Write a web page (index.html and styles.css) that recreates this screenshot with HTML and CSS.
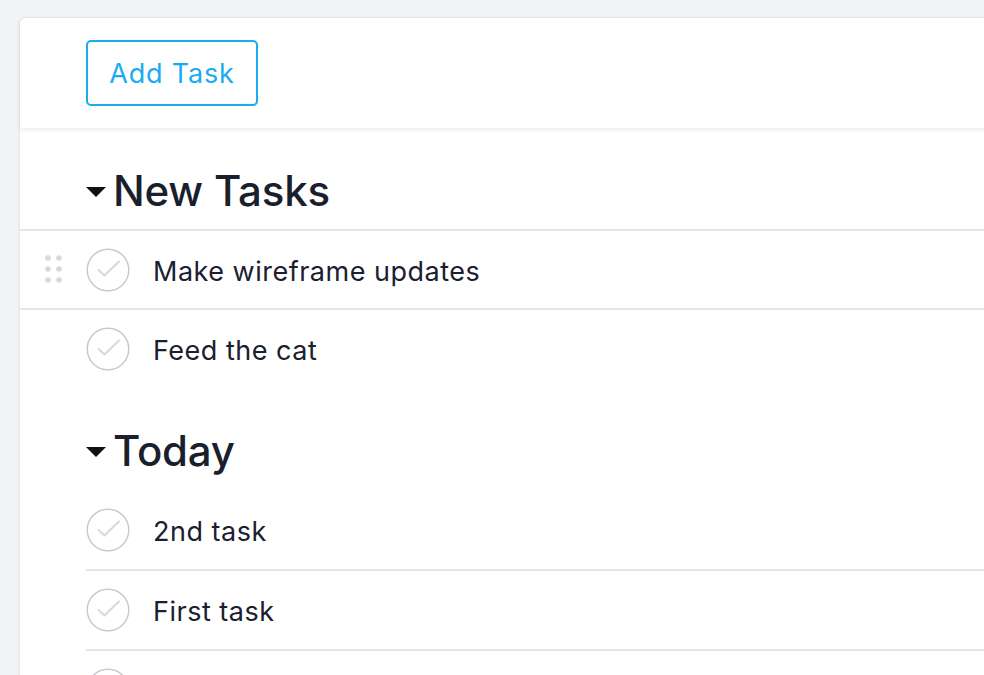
FILE: index.html
```html
<!DOCTYPE html>
<html>
<head>
<meta charset="utf-8">
<link rel="stylesheet" href="styles.css">
</head>
<body>
<div class="page">
  <div class="card">
    <header class="toolbar">
      <button class="add-btn">Add Task</button>
    </header>
    <section class="group">
      <h2 class="group-title"><span class="caret"></span>New Tasks</h2>
      <div class="task task-hover">
        <span class="drag">
          <svg width="18" height="28" viewBox="0 0 18 28"><g fill="#d3d9dd"><circle cx="3" cy="3" r="2.8"/><circle cx="14" cy="3" r="2.8"/><circle cx="3" cy="14" r="2.8"/><circle cx="14" cy="14" r="2.8"/><circle cx="3" cy="25" r="2.8"/><circle cx="14" cy="25" r="2.8"/></g></svg>
        </span>
        <span class="check"><svg width="44" height="44" viewBox="0 0 44 44"><circle cx="22" cy="22" r="20.75" fill="none" stroke="#c3cad1" stroke-width="1.5"/><path d="M12.5 22 L18.5 27.5 L33 13.5" fill="none" stroke="#d2d9df" stroke-width="2" stroke-linecap="round" stroke-linejoin="round"/></svg></span>
        <span class="task-name">Make wireframe updates</span>
      </div>
      <div class="task task-last">
        <span class="check"><svg width="44" height="44" viewBox="0 0 44 44"><circle cx="22" cy="22" r="20.75" fill="none" stroke="#c3cad1" stroke-width="1.5"/><path d="M12.5 22 L18.5 27.5 L33 13.5" fill="none" stroke="#d2d9df" stroke-width="2" stroke-linecap="round" stroke-linejoin="round"/></svg></span>
        <span class="task-name">Feed the cat</span>
      </div>
    </section>
    <section class="group group-plain">
      <h2 class="group-title"><span class="caret"></span>Today</h2>
      <div class="task task-inset">
        <span class="check"><svg width="44" height="44" viewBox="0 0 44 44"><circle cx="22" cy="22" r="20.75" fill="none" stroke="#c3cad1" stroke-width="1.5"/><path d="M12.5 22 L18.5 27.5 L33 13.5" fill="none" stroke="#d2d9df" stroke-width="2" stroke-linecap="round" stroke-linejoin="round"/></svg></span>
        <span class="task-name">2nd task</span>
      </div>
      <div class="task task-inset">
        <span class="check"><svg width="44" height="44" viewBox="0 0 44 44"><circle cx="22" cy="22" r="20.75" fill="none" stroke="#c3cad1" stroke-width="1.5"/><path d="M12.5 22 L18.5 27.5 L33 13.5" fill="none" stroke="#d2d9df" stroke-width="2" stroke-linecap="round" stroke-linejoin="round"/></svg></span>
        <span class="task-name">First task</span>
      </div>
      <div class="task task-inset">
        <span class="check"><svg width="44" height="44" viewBox="0 0 44 44"><circle cx="22" cy="22" r="20.75" fill="none" stroke="#c3cad1" stroke-width="1.5"/><path d="M12.5 22 L18.5 27.5 L33 13.5" fill="none" stroke="#d2d9df" stroke-width="2" stroke-linecap="round" stroke-linejoin="round"/></svg></span>
      </div>
    </section>
  </div>
</div>
</body>
</html>
```
FILE: styles.css
```css
* { box-sizing: border-box; }
html, body { margin: 0; padding: 0; }
body {
  background: #f1f4f5;
  font-family: Inter, "Noto Sans", "Liberation Sans", sans-serif;
  color: #1a2030;
  overflow: hidden;
  height: 675px;
}
.page {
  padding: 18px 0 0 20px;
}
.card {
  background: #fff;
  border-top-left-radius: 6px;
  box-shadow: 0 0 3px rgba(0, 0, 0, 0.12);
  width: 1000px;
  min-height: 700px;
}
.toolbar {
  height: 110px;
  padding: 22px 0 0 66px;
  box-shadow: 0 2px 5px rgba(0, 0, 0, 0.08);
  position: relative;
}
.add-btn {
  width: 172px;
  height: 66px;
  border: 2px solid #1aabf0;
  border-radius: 5px;
  background: #fff;
  color: #1aabf0;
  font-family: inherit;
  font-size: 27px;
  letter-spacing: 0.8px;
  padding: 0;
}
.group-title {
  margin: 0;
  height: 103px;
  padding: 38px 0 0 66px;
  font-size: 42px;
  line-height: 50px;
  font-weight: 500;
  letter-spacing: -0.2px;
  display: flex;
  align-items: flex-start;
  color: #1a1f2d;
}
.caret {
  width: 0;
  height: 0;
  border-left: 10px solid transparent;
  border-right: 10px solid transparent;
  border-top: 10px solid #111;
  margin: 21px 7px 0 0;
}
.group:not(.group-plain) .group-title {
  border-bottom: 2px solid #e3e7ea;
}
.task {
  height: 80px;
  display: flex;
  align-items: center;
  padding-left: 66px;
  position: relative;
  font-size: 27px;
  letter-spacing: 0.5px;
}
.task-name {
  padding-top: 3px;
}
.task-hover {
  height: 79px;
  border-bottom: 2px solid #e3e7ea;
}
.task-last {
  height: 78px;
}
.check {
  width: 44px;
  height: 44px;
  display: block;
  margin-right: 23px;
}
.check svg { display: block; }
.drag {
  position: absolute;
  left: 25px;
  top: 24px;
}
.drag svg { display: block; }
.group-plain .task {
  padding-left: 0;
  margin-left: 66px;
  border-bottom: 2px solid #e3e7ea;
}
```
